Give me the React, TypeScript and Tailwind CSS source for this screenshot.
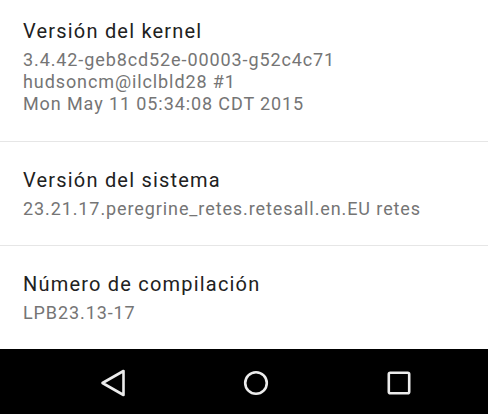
import React from "react"

const sections = [
  {
    title: "Versión del kernel",
    lines: ["3.4.42-geb8cd52e-00003-g52c4c71", "hudsoncm@ilclbld28 #1", "Mon May 11 05:34:08 CDT 2015"],
  },
  {
    title: "Versión del sistema",
    lines: ["23.21.17.peregrine_retes.retesall.en.EU retes"],
  },
  {
    title: "Número de compilación",
    lines: ["LPB23.13-17"],
  },
]

function Section({ title, lines, first }: { title: string; lines: string[]; first?: boolean }) {
  return (
    <div className={`px-[23px] ${first ? "pt-[17px] pb-[26px]" : "pt-[24px] pb-[25px] border-t border-[#e6e6e6]"}`}>
      <h3 className="text-[20px] leading-[28px] tracking-[1.2px] text-[#212121]">{title}</h3>
      <div className="mt-[4px]">
        {lines.map((l) => (
          <p key={l} className="text-[18px] leading-[22px] tracking-[0.9px] text-[#757575]">
            {l}
          </p>
        ))}
      </div>
    </div>
  )
}

export default function App() {
  return (
    <div className="w-[488px] h-[414px] flex flex-col bg-white font-['Roboto',sans-serif] overflow-hidden">
      <div className="flex-1">
        {sections.map((s, i) => (
          <Section key={s.title} title={s.title} lines={s.lines} first={i === 0} />
        ))}
      </div>

      {/* barra de navegação */}
      <div className="h-[66px] bg-black flex items-center pl-[41px]">
        <div className="w-[143px] flex justify-center pt-[3px]">
          <svg width="26" height="28" viewBox="0 0 26 28">
            <polygon points="2.5,14 23.5,2 23.5,26" fill="none" stroke="#ececec" strokeWidth="2.6" strokeLinejoin="round" />
          </svg>
        </div>
        <div className="w-[143px] flex justify-center pt-[3px]">
          <svg width="26" height="26" viewBox="0 0 26 26">
            <circle cx="13" cy="13" r="10.8" fill="none" stroke="#ececec" strokeWidth="2.6" />
          </svg>
        </div>
        <div className="w-[143px] flex justify-center pt-[3px]">
          <svg width="24" height="24" viewBox="0 0 24 24">
            <rect x="1.8" y="1.8" width="20.4" height="20.4" rx="1.5" fill="none" stroke="#ececec" strokeWidth="2.6" />
          </svg>
        </div>
      </div>
    </div>
  )
}
